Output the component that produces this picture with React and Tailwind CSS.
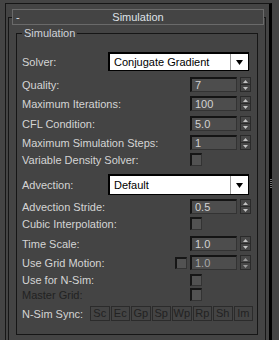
const FONT = "font-['Liberation_Sans',Arial,sans-serif]";

function Spinner({ dim }) {
  const c = dim ? '#9a9a9a' : '#c4c4c4';
  return (
    <div className="ml-[3px] flex h-[15px] w-[11px] flex-col border border-[#2a2a2a] bg-[#474747]">
      <div className="flex flex-1 items-center justify-center border-b border-[#2a2a2a]">
        <svg width="5" height="3" viewBox="0 0 5 3">
          <path d="M2.5 0L5 3H0z" fill={c} />
        </svg>
      </div>
      <div className="flex flex-1 items-center justify-center">
        <svg width="5" height="3" viewBox="0 0 5 3">
          <path d="M0 0h5L2.5 3z" fill={c} />
        </svg>
      </div>
    </div>
  );
}

function Field({ value, dim }) {
  return (
    <div className="flex items-center">
      <div
        className={`flex h-[15px] w-[47px] items-center border-t-2 border-l-2 border-r border-b border-[#141414] border-r-[#333] border-b-[#333] bg-[#4d4d4d] pl-[3px] ${
          dim ? 'text-[#a8a8a8]' : 'text-[#d2d2d2]'
        }`}
      >
        {value}
      </div>
      <Spinner dim={dim} />
    </div>
  );
}

function Check({ small }) {
  return (
    <div
      className={`${small ? 'h-[12px]' : 'h-[13px]'} w-[12px] border-t-2 border-l-2 border-r border-b border-[#161616] border-r-[#333] border-b-[#333] bg-[#525252]`}
    />
  );
}

function Dropdown({ value, tall }) {
  return (
    <div
      className={`flex ${tall ? 'h-[21px]' : 'h-[19px]'} w-[141px] items-stretch border-t-2 border-l-2 border-r border-b border-black bg-white text-black`}
    >
      <div className="flex flex-1 items-center pl-[4px]">{value}</div>
      <div className="w-px bg-[#9a9a9a]" />
      <div className="flex w-[17px] items-center justify-center">
        <svg width="7" height="5" viewBox="0 0 7 5">
          <path d="M0 0h7L3.5 5z" fill="#000" />
        </svg>
      </div>
    </div>
  );
}

function Row({ mt, h, label, labelW, muted, children }) {
  return (
    <div className={`flex items-center ${mt} ${h}`}>
      <span
        className={`${labelW} shrink-0 whitespace-nowrap pt-px leading-[13px] ${
          muted ? 'text-[#222]' : 'text-[#d4d4d4]'
        }`}
      >
        {label}
      </span>
      {children}
    </div>
  );
}

const SYNC = ['Sc', 'Ec', 'Gp', 'Sp', 'Wp', 'Rp', 'Sh', 'Im'];

export default function App() {
  return (
    <div className={`relative h-[340px] w-[279px] overflow-hidden bg-[#444] pl-[5px] pt-[3px] text-[11px] ${FONT}`}>
      {/* outer panel, right edge is the scrollbar */}
      <div className="w-[267px] border-t border-l border-[#161616] border-r-[3px] border-r-black pb-[40px]">
        {/* rollout frame */}
        <div className="ml-[2px] mt-[13px] w-[258px] border-t border-l border-r border-[#161616] pb-[40px]">
          {/* rollout header */}
          <div className="relative -mt-[9px] ml-[3px] grid h-[16px] w-[252px] grid-cols-[20px_1fr_20px] items-center border border-[#6a6a6a] bg-[#444] leading-[13px] text-[#dfe2e8]">
            <span className="pl-[3px]">-</span>
            <span className="text-center">Simulation</span>
            <span />
          </div>

          {/* group box */}
          <div className="relative ml-[7px] mt-[8px] w-[242px] border border-[#161616] pb-[13px] pl-[5px] pt-[18px]">
            <span className="absolute -top-[7px] left-[5px] bg-[#444] px-[2px] leading-[13px] text-[#cfd2da]">
              Simulation
            </span>

            <Row mt="mt-0" h="h-[19px]" label="Solver:" labelW="w-[86px]">
              <Dropdown value="Conjugate Gradient" />
            </Row>
            <Row mt="mt-[6px]" h="h-[15px]" label="Quality:" labelW="w-[168px]">
              <Field value="7" />
            </Row>
            <Row mt="mt-[4px]" h="h-[15px]" label="Maximum Iterations:" labelW="w-[168px]">
              <Field value="100" />
            </Row>
            <Row mt="mt-[5px]" h="h-[15px]" label="CFL Condition:" labelW="w-[168px]">
              <Field value="5.0" />
            </Row>
            <Row mt="mt-[4px]" h="h-[15px]" label="Maximum Simulation Steps:" labelW="w-[168px]">
              <Field value="1" />
            </Row>
            <Row mt="mt-[3px]" h="h-[13px]" label="Variable Density Solver:" labelW="w-[168px]">
              <Check />
            </Row>
            <Row mt="mt-[8px]" h="h-[21px]" label="Advection:" labelW="w-[86px]">
              <Dropdown value="Default" tall />
            </Row>
            <Row mt="mt-[4px]" h="h-[15px]" label="Advection Stride:" labelW="w-[168px]">
              <Field value="0.5" />
            </Row>
            <Row mt="mt-[3px]" h="h-[13px]" label="Cubic Interpolation:" labelW="w-[168px]">
              <Check />
            </Row>
            <Row mt="mt-[6px]" h="h-[15px]" label="Time Scale:" labelW="w-[168px]">
              <Field value="1.0" />
            </Row>
            <Row mt="mt-[4px]" h="h-[15px]" label="Use Grid Motion:" labelW="w-[153px]">
              <Check small />
              <div className="ml-[3px]">
                <Field value="1.0" dim />
              </div>
            </Row>
            <Row mt="mt-[4px]" h="h-[12px]" label="Use for N-Sim:" labelW="w-[168px]">
              <Check small />
            </Row>
            <Row mt="mt-[2px]" h="h-[13px]" label="Master Grid:" labelW="w-[168px]" muted>
              <Check />
            </Row>
            <Row mt="mt-[5px]" h="h-[15px]" label="N-Sim Sync:" labelW="w-[68px]">
              <div className="flex w-[163px] gap-px">
                {SYNC.map((s) => (
                  <div
                    key={s}
                    className="flex h-[15px] flex-1 items-center justify-center border border-[#2b2b2b] leading-[13px] text-[#222]"
                  >
                    {s}
                  </div>
                ))}
              </div>
            </Row>
          </div>
        </div>
      </div>

      {/* scrollbar grip */}
      <div className="absolute left-[270px] top-[179px] flex flex-col gap-px">
        {[0, 1, 2, 3, 4].map((i) => (
          <div key={i} className="h-px w-[2px] bg-[#777]" />
        ))}
      </div>
    </div>
  );
}
